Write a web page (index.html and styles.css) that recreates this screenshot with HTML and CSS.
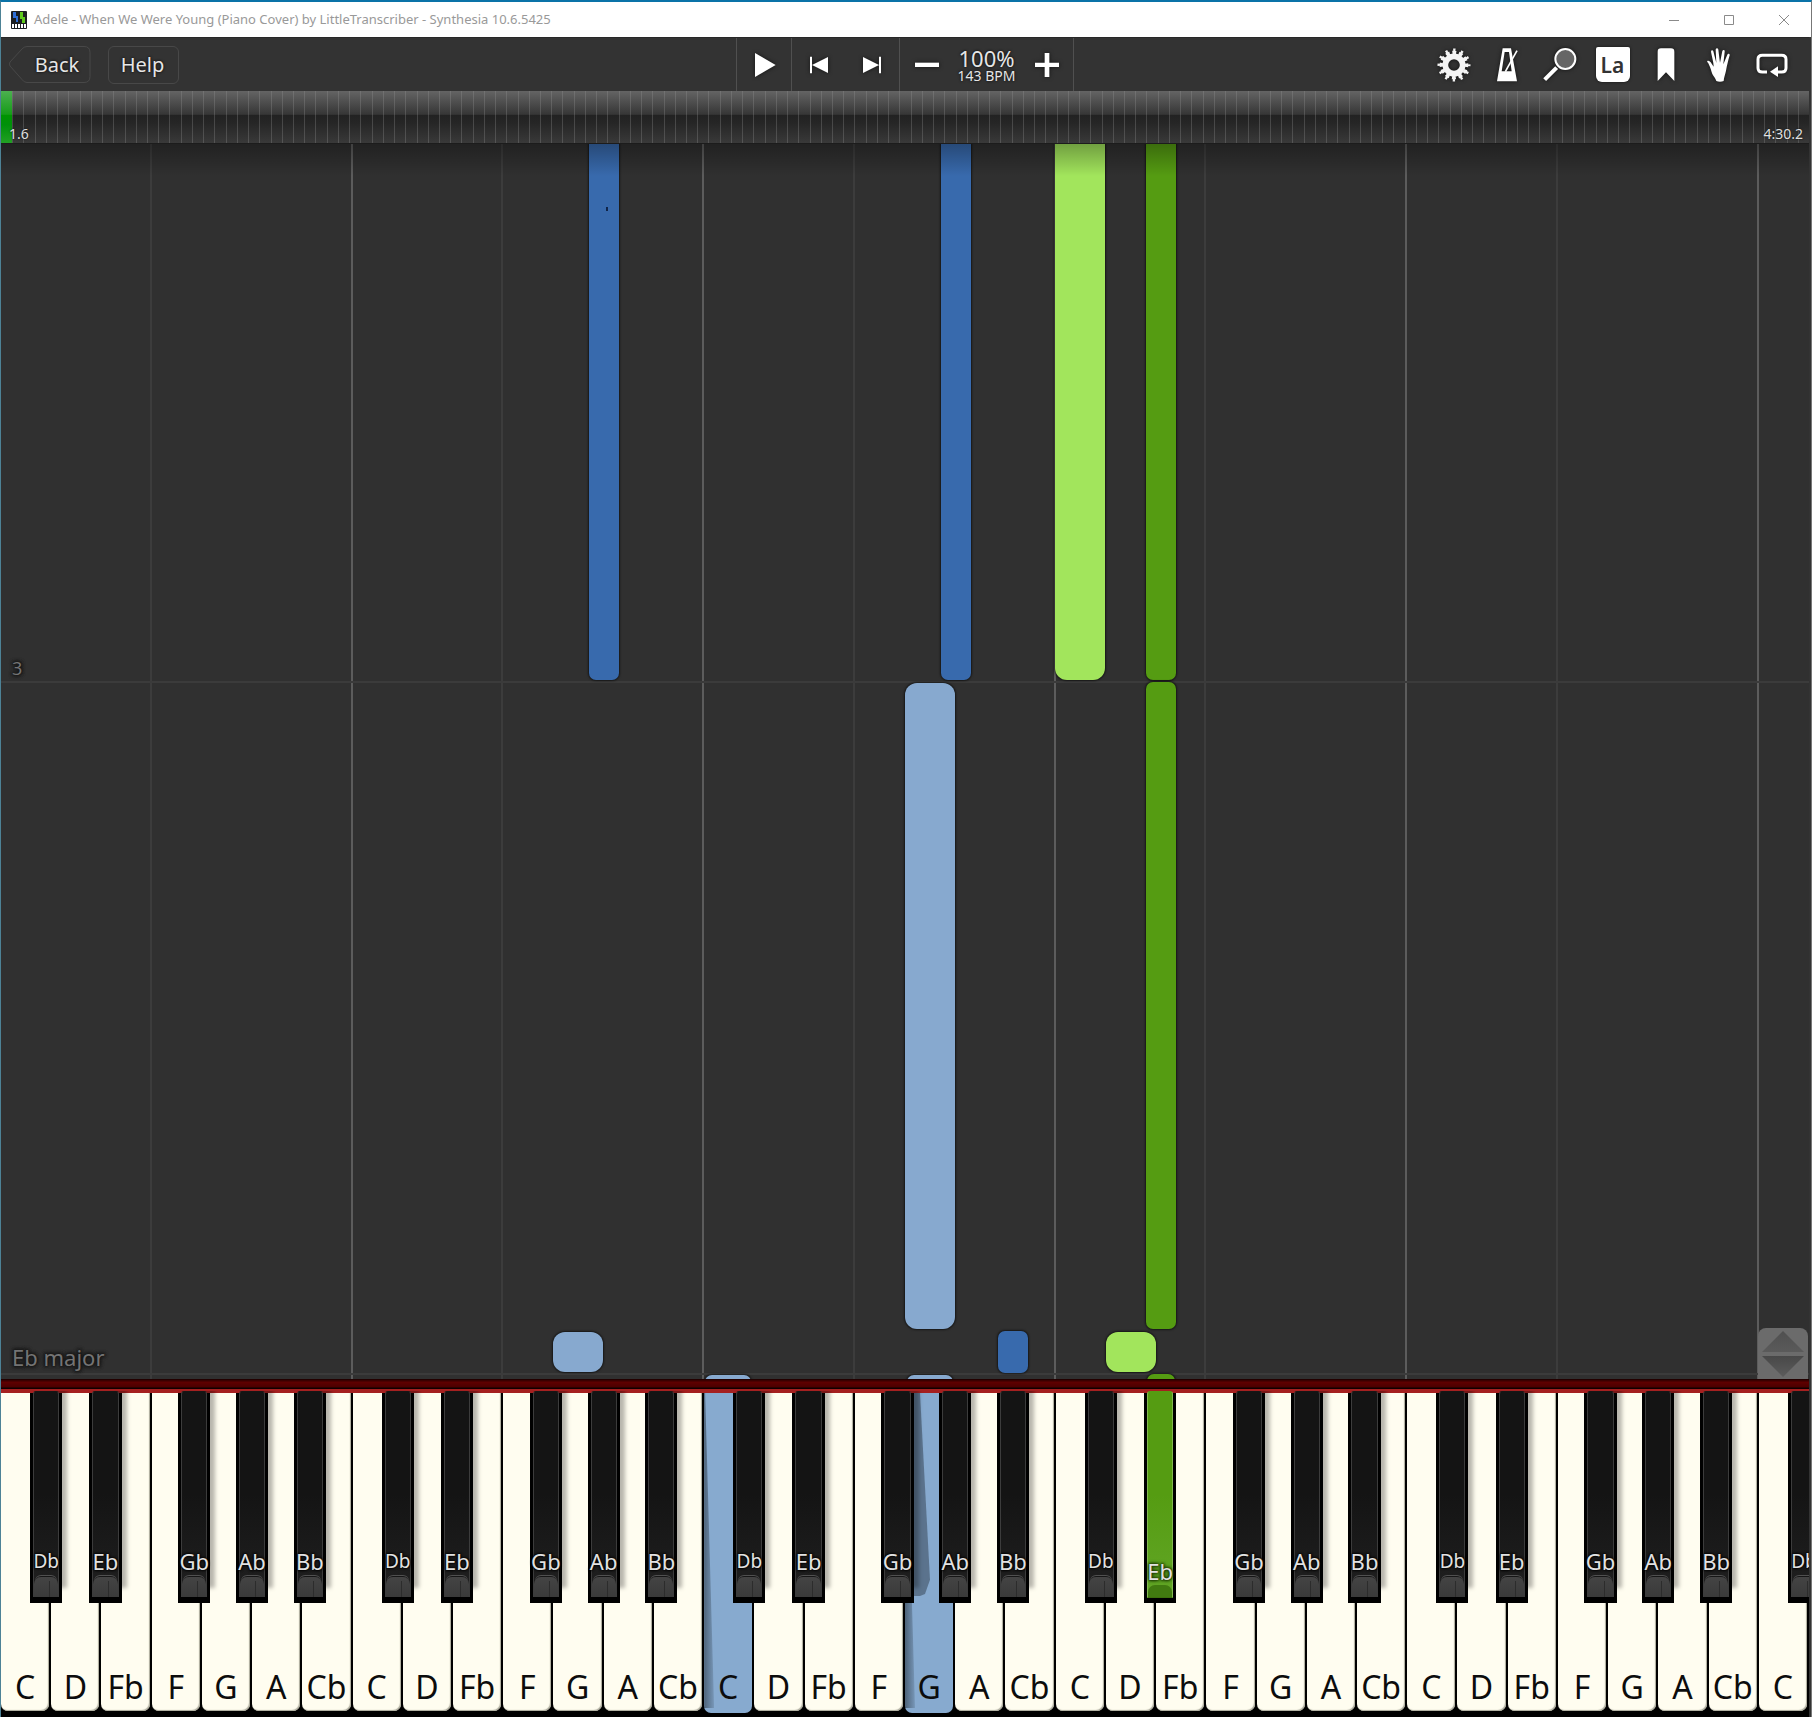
FILE: index.html
```
<!DOCTYPE html>
<html lang="en">
<head>
<meta charset="utf-8">
<title>Adele - When We Were Young (Piano Cover) by LittleTranscriber - Synthesia 10.6.5425</title>
<link rel="stylesheet" href="styles.css">
</head>
<body>
<div class="window">
  <header class="titlebar">
    <svg class="app-icon" viewBox="0 0 16 18" aria-hidden="true">
      <rect width="16" height="18" rx="1" fill="#1b1e22"/>
      <path d="M2 1h3v4h2v6H5V7H2z" fill="#2f6fd8"/>
      <path d="M9 1h3v5h2v6h-3V8H9z" fill="#5fc81e"/>
      <path d="M1 13h2v4H1zM4 13h2v4H4zM7 13h2v4H7zM10 13h2v4h-2zM13 13h2v4h-2z" fill="#fff"/>
    </svg>
    <h1 class="title">Adele - When We Were Young (Piano Cover) by LittleTranscriber - Synthesia 10.6.5425</h1>
    <button class="win-button" aria-label="Minimize"><svg viewBox="0 0 10 10"><path d="M0 5.5h10"/></svg></button>
    <button class="win-button" aria-label="Maximize"><svg viewBox="0 0 10 10"><path d="M.5.5h9v9h-9z"/></svg></button>
    <button class="win-button" aria-label="Close"><svg viewBox="0 0 10 10"><path d="M0 0l10 10M10 0L0 10"/></svg></button>
  </header>

  <main class="app">
    <div class="toolbar">
      <div class="nav">
        <button class="back">
          <svg class="back-shape" viewBox="0 0 84 40" aria-hidden="true"><path d="M19 1.500h57q6 0 6 6v24q0 6-6 6H19q-3 0-5-3L2 21q-1-2 0-4L14 4q2-2.500 5-2.500z"/></svg>
          <span>Back</span>
        </button>
        <button class="help">Help</button>
      </div>
      <div class="transport">
        <div class="group group-play">
          <button class="tool" aria-label="Play"><svg viewBox="-60 -60 120 120"><path d="M-27-36L35 0l-62 36z"/></svg></button>
        </div>
        <div class="group group-skip">
          <button class="tool" aria-label="Previous"><svg viewBox="-60 -60 120 120"><path d="M-27-25h6v50h-6zM27-24v48L-21 0z"/></svg></button>
          <button class="tool" aria-label="Next"><svg viewBox="-60 -60 120 120"><path d="M21-25h6v50h-6zM-27-24v48L21 0z"/></svg></button>
        </div>
        <div class="group group-speed">
          <button class="tool" aria-label="Slower"><svg viewBox="-60 -60 120 120"><path d="M-36-7h72V6h-72z"/></svg></button>
          <div class="speed"><span class="percent">100%</span><span class="bpm">143 BPM</span></div>
          <button class="tool" aria-label="Faster"><svg viewBox="-60 -60 120 120"><path d="M-36-7h29v-29H7v29h29V6H7v30H-7V6h-29z"/></svg></button>
        </div>
      </div>
      <div class="tools">
        <button class="tool" aria-label="Settings"><svg viewBox="-60 -60 120 120" fill="none">
          <g fill="none" stroke="#f4f4f4"><circle r="26" stroke-width="17"/>
          <circle r="38" stroke-width="10" pathLength="120" stroke-dasharray="6 4" stroke-dashoffset="3"/>
          <circle r="45" stroke-width="9" pathLength="120" stroke-dasharray="3 7" stroke-dashoffset="1.500"/></g></svg></button>
        <button class="tool" aria-label="Metronome"><svg viewBox="-60 -60 120 120">
          <path fill-rule="evenodd" d="M-13-50h25l18 99h-60zM-7-39l-9 58h30L6-39z"/>
          <path fill="none" stroke="#fff" stroke-width="5" d="M30-43L-5 20"/></svg></button>
        <button class="tool" aria-label="Zoom"><svg viewBox="-60 -60 120 120">
          <circle cx="16" cy="-18" r="30" fill="#666" stroke="#fff" stroke-width="6"/>
          <path fill="none" stroke="#fff" stroke-width="12" d="M-46 44L-10 8"/></svg></button>
        <button class="tool" aria-label="Note labels"><span class="la">La</span></button>
        <button class="tool" aria-label="Bookmarks"><svg viewBox="-60 -60 120 120"><path d="M-25-40q0-10 10-10h30q10 0 10 10v88L0 22l-25 26z"/></svg></button>
        <button class="tool" aria-label="Hands"><svg viewBox="-60 -60 120 120">
          <path d="M-8 48c-3-9-8-13-12-21-4-11-5-18-11-30-2-5-6-6-4-9 5-2 10 3 13 8l6 9c0-14-6-32-8-45 1-6 6-5 7-1l9 35-2-40c1-6 7-6 8 0l5 39 7-35c2-5 8-4 7 2l-4 38 12-29c2-5 8-3 7 2-5 17-8 31-11 46-3 13-6 20-7 31-6 3-16 3-22 0z"/></svg></button>
        <button class="tool" aria-label="Loop"><svg viewBox="-60 -60 120 120">
          <path fill="none" stroke="#fff" stroke-width="9" d="M-15 21h-14q-13 0-13-12v-26q0-12 13-12h58q13 0 13 12V9q0 12-13 12H12"/><path d="M-6 20L18 4v32z"/></svg></button>
      </div>
    </div>

    <div class="timeline">
      <div class="played"></div>
      <span class="time time-now">1.6</span>
      <span class="time time-end">4:30.2</span>
    </div>

    <section class="field" aria-label="Falling notes">
      <div class="measure" style="top: 43.5%"></div>
      <div class="measure" style="top: 99.5%"></div>
      <div class="note note-open left-dark" style="left: 32.5%; top: 0; width: 1.66%; height: 43.4%"></div>
      <div class="note note-open left-dark" style="left: 51.97%; top: 0; width: 1.66%; height: 43.4%"></div>
      <div class="note note-open note-wide right-light" style="left: 58.32%; top: 0; width: 2.74%; height: 43.4%"></div>
      <div class="note note-open right-dark" style="left: 63.35%; top: 0; width: 1.62%; height: 43.4%"></div>
      <div class="note right-dark" style="left: 63.35%; top: 43.56%; width: 1.62%; height: 52.39%"></div>
      <div class="note note-wide left-light" style="left: 50.01%; top: 43.64%; width: 2.74%; height: 52.31%"></div>
      <div class="note note-wide left-light" style="left: 30.55%; top: 96.19%; width: 2.74%; height: 3.24%"></div>
      <div class="note left-dark" style="left: 55.16%; top: 96.11%; width: 1.66%; height: 3.4%"></div>
      <div class="note note-wide right-light" style="left: 61.12%; top: 96.19%; width: 2.74%; height: 3.24%"></div>
      <div class="note left-light" style="left: 38.96%; top: 99.7%; width: 2.54%; height: 2%"></div>
      <div class="note left-light" style="left: 50.11%; top: 99.7%; width: 2.54%; height: 2%"></div>
      <div class="note right-dark" style="left: 63.37%; top: 99.6%; width: 1.58%; height: 2%"></div>
      <div class="speck" style="left: 33.48%; top: 5.1%"></div>
      <span class="mark measure-number" style="bottom: 56.6%">3</span>
      <span class="mark key-name">Eb major</span>
      <button class="resize" aria-label="Resize keyboard"><svg viewBox="0 0 50 51">
        <defs>
          <linearGradient id="up" x2="0" y2="1"><stop offset="0" stop-color="#505050"/><stop offset="1" stop-color="#5a5a5a"/></linearGradient>
          <linearGradient id="down" x2="0" y2="1"><stop offset="0" stop-color="#484848"/><stop offset="1" stop-color="#5c5c5c"/></linearGradient>
        </defs>
        <path fill="url(#up)" d="M25 3l21 21H4z"/><path fill="url(#down)" d="M4 28h42L25 49z"/></svg></button>
    </section>

    <div class="felt"></div>

    <section class="keyboard" aria-label="Piano keyboard">
      <div class="key c"><button class="white">C</button><button class="black">Db</button></div>
      <div class="key d"><button class="white">D</button><button class="black">Eb</button></div>
      <div class="key"><button class="white">Fb</button></div>
      <div class="key f"><button class="white">F</button><button class="black">Gb</button></div>
      <div class="key g"><button class="white">G</button><button class="black">Ab</button></div>
      <div class="key a"><button class="white">A</button><button class="black">Bb</button></div>
      <div class="key"><button class="white">Cb</button></div>

      <div class="key c"><button class="white">C</button><button class="black">Db</button></div>
      <div class="key d"><button class="white">D</button><button class="black">Eb</button></div>
      <div class="key"><button class="white">Fb</button></div>
      <div class="key f"><button class="white">F</button><button class="black">Gb</button></div>
      <div class="key g"><button class="white">G</button><button class="black">Ab</button></div>
      <div class="key a"><button class="white">A</button><button class="black">Bb</button></div>
      <div class="key"><button class="white">Cb</button></div>

      <div class="key c"><button class="white pressed">C</button><button class="black">Db</button></div>
      <div class="key d"><button class="white">D</button><button class="black">Eb</button></div>
      <div class="key"><button class="white">Fb</button></div>
      <div class="key f"><button class="white">F</button><button class="black">Gb</button></div>
      <div class="key g"><button class="white pressed shaded">G</button><button class="black">Ab</button></div>
      <div class="key a"><button class="white">A</button><button class="black">Bb</button></div>
      <div class="key"><button class="white">Cb</button></div>

      <div class="key c"><button class="white">C</button><button class="black">Db</button></div>
      <div class="key d"><button class="white">D</button><button class="black pressed">Eb</button></div>
      <div class="key"><button class="white">Fb</button></div>
      <div class="key f"><button class="white">F</button><button class="black">Gb</button></div>
      <div class="key g"><button class="white">G</button><button class="black">Ab</button></div>
      <div class="key a"><button class="white">A</button><button class="black">Bb</button></div>
      <div class="key"><button class="white">Cb</button></div>

      <div class="key c"><button class="white">C</button><button class="black">Db</button></div>
      <div class="key d"><button class="white">D</button><button class="black">Eb</button></div>
      <div class="key"><button class="white">Fb</button></div>
      <div class="key f"><button class="white">F</button><button class="black">Gb</button></div>
      <div class="key g"><button class="white">G</button><button class="black">Ab</button></div>
      <div class="key a"><button class="white">A</button><button class="black">Bb</button></div>
      <div class="key"><button class="white">Cb</button></div>

      <div class="key c"><button class="white">C</button><button class="black">Db</button></div>
    </section>
  </main>
</div>
</body>
</html>
```
FILE: styles.css
```
* {
  box-sizing: border-box;
}

body {
  margin: 0;
  font-family: "Noto Sans", "Open Sans", sans-serif;
}

button {
  margin: 0;
  padding: 0;
  border: 0;
  background: none;
  color: inherit;
  font: inherit;
}

svg {
  display: block;
}

.window {
  display: flex;
  flex-direction: column;
  min-height: 100vh;
  border: solid #0a73a8;
  border-width: 2px 1px 0;
  border-right-color: #777;
  border-left-color: #4d8296;
}

/* Title bar */
.titlebar {
  display: flex;
  align-items: center;
  height: 35px;
  padding: 0 0 0 10px;
  background: #fff;
}

.app-icon {
  width: 16px;
  height: 18px;
}

.title {
  flex: 1;
  margin: 0 0 0 7px;
  padding-bottom: 2px;
  color: #999;
  font-size: 13px;
  font-weight: 400;
  white-space: nowrap;
}

.win-button {
  display: grid;
  place-items: center;
  width: 55px;
  height: 35px;
}

.win-button svg {
  width: 10px;
  height: 10px;
  fill: none;
  stroke: #8a8a8a;
}

.app {
  display: flex;
  flex: 1;
  flex-direction: column;
  padding-right: 2px;
  background: #333;
}

/* Toolbar */
.toolbar {
  display: grid;
  grid-template-columns: 1fr auto 1fr;
  height: 54px;
  border-top: 1px solid #282828;
  color: #e6e6e6;
}

.nav {
  display: flex;
  align-items: center;
  gap: 16px;
  padding-left: 7px;
  font-size: 20px;
}

.back {
  position: relative;
  width: 84px;
  height: 40px;
  padding-left: 14px;
  text-shadow: 0 0 3px #000;
}

.back-shape {
  position: absolute;
  inset: 0;
  fill: none;
  stroke: #484848;
}

.help {
  width: 71px;
  height: 38px;
  padding-right: 2px;
  border: 1px solid #484848;
  border-radius: 6px;
  text-shadow: 0 0 3px #000;
}

.transport {
  display: flex;
  border-right: 1px solid #505050;
}

.group {
  display: flex;
  align-items: center;
  justify-content: center;
  border-left: 1px solid #505050;
}

.group-play {
  width: 55px;
}

.group-skip {
  width: 108px;
  gap: 13px;
}

.group-speed {
  width: 174px;
}

.tool {
  display: grid;
  place-items: center;
  height: 53px;
}

.tool svg {
  width: 40px;
  height: 40px;
  fill: #fff;
  filter: drop-shadow(0 0 2px #111);
}

.speed {
  display: flex;
  flex-direction: column;
  width: 80px;
  text-align: center;
  text-shadow: 0 0 3px #000;
}

.percent {
  font-size: 22px;
  line-height: 22px;
}

.bpm {
  font-size: 14px;
  line-height: 14px;
}

.tools {
  display: flex;
  justify-content: flex-end;
  padding-right: 11px;
}

.tools .tool {
  width: 53px;
}

.la {
  width: 34px;
  height: 35px;
  border-radius: 2px 2px 6px 6px;
  background: #fff;
  box-shadow: 0 0 3px #111;
  color: #333;
  font-size: 21px;
  font-weight: 600;
  line-height: 37px;
}

/* Song timeline */
.timeline {
  position: relative;
  display: flex;
  align-items: flex-end;
  justify-content: space-between;
  height: 53px;
  padding: 0 6px 0 8px;
  border-bottom: 1px solid #1c1c1c;
  background:
    repeating-linear-gradient(90deg, rgb(150 150 150 / 30%) 0 1px, transparent 1px calc(100% / 161)),
    linear-gradient(#646464, #363636 45%, #222 46%, #252525 60%, #393939);
}

.played {
  position: absolute;
  inset: 0 auto 0 0;
  width: 11px;
  background: linear-gradient(#4cb050, #169c18 45%, #009400 46%, #00900a 65%, #22a024);
}

.time {
  position: relative;
  color: #e0e0e0;
  font-size: 14px;
  line-height: 19px;
  text-shadow: 0 0 2px #000;
}

/* Falling notes */
.field {
  position: relative;
  flex: 1;
  min-height: 400px;
  overflow: hidden;
  background:
    repeating-linear-gradient(90deg,
      transparent 0 calc(300% / 36 - 2px),
      #3c3c3c calc(300% / 36 - 2px) calc(300% / 36),
      transparent calc(300% / 36) calc(700% / 36 - 2px),
      #5c5c5c calc(700% / 36 - 2px) calc(700% / 36)),
    #303030;
}

.field::after {
  position: absolute;
  inset: 0 0 auto;
  height: 32px;
  background: linear-gradient(rgb(0 0 0 / 30%), transparent);
  content: "";
}

.measure {
  position: absolute;
  right: 0;
  left: 0;
  height: 2px;
  background: #3b3b3b;
}

.note {
  position: absolute;
  border-radius: 7px;
  box-shadow: 0 0 2px 1px rgb(0 0 0 / 55%);
}

.note-wide {
  border-radius: 12px;
}

.note-open {
  border-top-left-radius: 0;
  border-top-right-radius: 0;
}

.left-dark {
  background: #386aad;
}

.left-light {
  background: #87a9cf;
}

.right-dark {
  background: #559c12;
}

.right-light {
  background: #a2e55c;
}

.speck {
  position: absolute;
  width: 2px;
  height: 4px;
  background: #10254a;
}

.mark {
  position: absolute;
  color: #747474;
  text-shadow: 0 0 2px #181818, 0 0 3px #181818, 0 0 3px #181818, 0 0 4px #181818, 0 0 4px #181818;
}

.measure-number {
  left: 11px;
  font-size: 18px;
  line-height: 24px;
}

.key-name {
  bottom: 6px;
  left: 11px;
  font-size: 22px;
  line-height: 32px;
}

.resize {
  position: absolute;
  right: 1px;
  bottom: 0;
  width: 50px;
  height: 51px;
  border-radius: 8px 8px 0 0;
  background: #6b6b6b;
}

/* Strip between the notes and the keys */
.felt {
  height: 14px;
  background: linear-gradient(#200 0 1px, #3a0000 1px 2px, #600000 3px, #4c0000 8px, #100 9px 10px, #a52020 10px);
}

/* Keyboard */
.keyboard {
  display: grid;
  grid-template-columns: repeat(36, minmax(0, 1fr));
  height: 324px;
  padding-bottom: 6px;
  background: #000;
  clip-path: inset(-2px 0 0 0);
}

.key {
  position: relative;
  display: flex;
  padding: 0 2px 0 0;
}

.white {
  display: flex;
  flex: 1;
  align-items: flex-end;
  justify-content: center;
  min-width: 0;
  padding-bottom: 2px;
  border-radius: 0 0 7px 7px;
  background: #fffdf0;
  box-shadow: inset -1px -1px 1px #aaa99a;
  color: #0c0c0c;
  font-size: 32px;
  line-height: 44px;
}

.white.pressed {
  position: relative;
  margin-bottom: -2px;
  padding-bottom: 4px;
  background: #87aacf;
  box-shadow: none;
}

.white.pressed::before,
.white.shaded::after {
  position: absolute;
  top: 0;
  left: 0;
  background: rgb(30 40 50 / 42%);
  content: "";
}

.white.pressed::before {
  bottom: 5px;
  width: 10px;
  background: linear-gradient(90deg, rgb(30 40 50 / 55%), rgb(30 40 50 / 15%));
  clip-path: polygon(0 0, 10% 0, 100% 100%, 0 100%);
}

.white.shaded::after {
  width: 25px;
  height: 203px;
  clip-path: polygon(0 0, 60% 0, 100% 92%, 80% 99%, 60% 100%, 0 100%);
}

.black {
  position: absolute;
  z-index: 2;
  top: 0;
  display: flex;
  justify-content: center;
  width: 64%;
  height: 210px;
  padding-top: 150px;
  background: #000;
  box-shadow: 6px -14px 4px -1px rgb(0 0 0 / 28%);
  color: #e2e2e2;
  font-size: 22px;
  line-height: 36px;
  text-shadow: 0 0 2px #000, 0 0 3px #000, 0 0 3px #000;
}

/* Raised face of the key */
.black::before {
  position: absolute;
  z-index: -1;
  inset: -2px 3px 6px;
  border: 1px solid #3c3c3c;
  border-top-color: #161616;
  border-radius: 3px 3px 0 0;
  background: linear-gradient(#141414 50%, #202020);
  content: "";
}

/* Front lip of the key */
.black::after {
  position: absolute;
  z-index: -1;
  right: 4px;
  bottom: 6px;
  left: 4px;
  height: 20px;
  border-radius: 7px 7px 0 0;
  background:
    linear-gradient(#2c2c2c, #2c2c2c) 65% 100% / 1px 16px no-repeat,
    linear-gradient(#444, #3a3a3a);
  box-shadow: 0 -2px 0 -1px #161616, 0 -3px 0 -1px #505050;
  content: "";
}

.black.pressed {
  padding-top: 160px;
  box-shadow: none;
  text-shadow: 0 0 2px #1c3a04, 0 0 3px #1c3a04, 0 0 3px #1c3a04, 0 0 4px #1c3a04;
}

.black.pressed::before {
  bottom: 5px;
  border-color: #83b950;
  border-top-color: #559c12;
  border-bottom-color: #3c700c;
  background: linear-gradient(#559c12 50%, #62a626);
}

.black.pressed::after {
  height: 12px;
  background: #417a10;
  box-shadow: none;
}

.c .black {
  left: 58%;
  font-size: 19px;
}

.d .black {
  left: 76%;
}

.f .black {
  left: 53%;
}

.g .black {
  left: 68%;
}

.a .black {
  left: 83%;
}
```
